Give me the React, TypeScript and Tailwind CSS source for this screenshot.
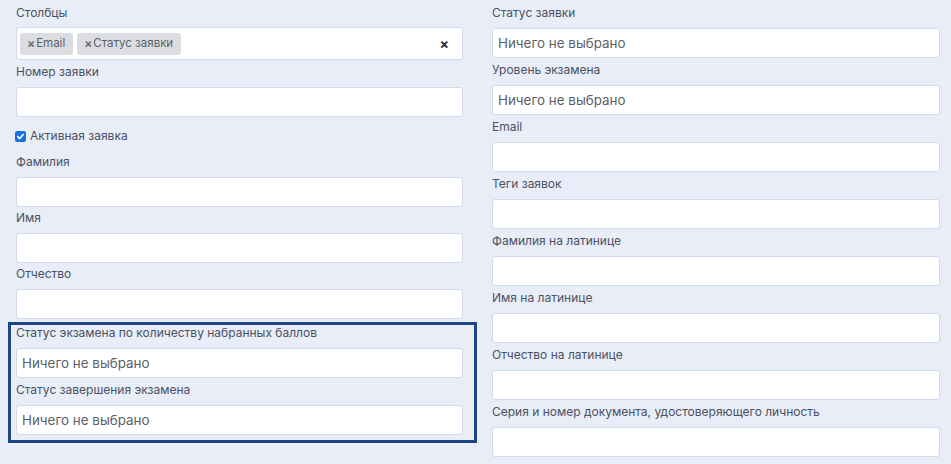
import React from 'react';

const font = { fontFamily: '"Inter", "Noto Sans", sans-serif' };

function Label({ children, top = 'mt-[3px]' }: { children: React.ReactNode; top?: string }) {
  return <div className={`${top} h-4 text-[12px] leading-4 text-[#4b5263]`}>{children}</div>;
}

function Input({ value, className = '' }: { value?: string; className?: string }) {
  return (
    <div
      className={`mt-[7px] flex h-[30px] items-center rounded-[3px] border border-[#d3d9ec] bg-white px-[5px] text-[13.4px] text-[#5a5f67] ${className}`}
    >
      {value}
    </div>
  );
}

function Chip({ label }: { label: string }) {
  return (
    <span className="flex h-[22px] items-center rounded-[3px] bg-[#dcdde0] pl-[7px] pr-[8px] text-[11.5px] text-[#5b6068]">
      <span className="mr-[1px] text-[12px] font-bold text-[#6b6f75]">×</span>
      {label}
    </span>
  );
}

export default function App() {
  return (
    <div className="min-h-[464px] w-[951px] bg-[#e8edf7]" style={font}>
      <div className="grid grid-cols-[447px_448px] gap-x-[29px] pl-4 pt-[2px]">
        {/* left column */}
        <div className="flex flex-col">
          <Label>Столбцы</Label>
          <div className="mt-[6px] flex h-[33px] items-center gap-1 rounded-[3px] border border-[#d3d9ec] bg-white pl-[3px] pr-[13px]">
            <Chip label="Email" />
            <Chip label="Статус заявки" />
            <span className="ml-auto text-[14px] font-bold text-[#2b2f36]">×</span>
          </div>

          <Label top="mt-[4px]">Номер заявки</Label>
          <Input />

          <label className="mt-[11px] flex h-4 items-center gap-[4px] text-[12px] text-[#4b5263]">
            <span className="ml-[-1px] flex h-[11px] w-[11px] items-center justify-center rounded-[2px] bg-[#1e6fe6]">
              <svg width="9" height="9" viewBox="0 0 10 10" fill="none">
                <path d="M2 5.2 4.1 7.3 8 2.8" stroke="white" strokeWidth="1.8" strokeLinecap="round" strokeLinejoin="round" />
              </svg>
            </span>
            Активная заявка
          </label>

          <Label top="mt-[10px]">Фамилия</Label>
          <Input />
          <Label>Имя</Label>
          <Input />
          <Label>Отчество</Label>
          <Input />

          <div className="mt-[3px] ml-[-8px] mr-[-14px] border-[3px] border-[#1b4683] pb-[5px] pl-[5px] pr-[11px]">
            <div className="h-4 text-[12px] leading-4 text-[#4b5263]">
              Статус экзамена по количеству набранных баллов
            </div>
            <Input value="Ничего не выбрано" className="mt-[5px]" />
            <Label top="mt-[4px]">Статус завершения экзамена</Label>
            <Input value="Ничего не выбрано" />
          </div>
        </div>

        {/* right column */}
        <div className="flex flex-col">
          <Label>Статус заявки</Label>
          <Input value="Ничего не выбрано" />
          <Label top="mt-[4px]">Уровень экзамена</Label>
          <Input value="Ничего не выбрано" />
          <Label top="mt-[4px]">Email</Label>
          <Input />
          <Label top="mt-[4px]">Теги заявок</Label>
          <Input />
          <Label top="mt-[4px]">Фамилия на латинице</Label>
          <Input />
          <Label top="mt-[4px]">Имя на латинице</Label>
          <Input />
          <Label top="mt-[4px]">Отчество на латинице</Label>
          <Input />
          <Label top="mt-[4px]">Серия и номер документа, удостоверяющего личность</Label>
          <Input />
        </div>
      </div>
    </div>
  );
}
